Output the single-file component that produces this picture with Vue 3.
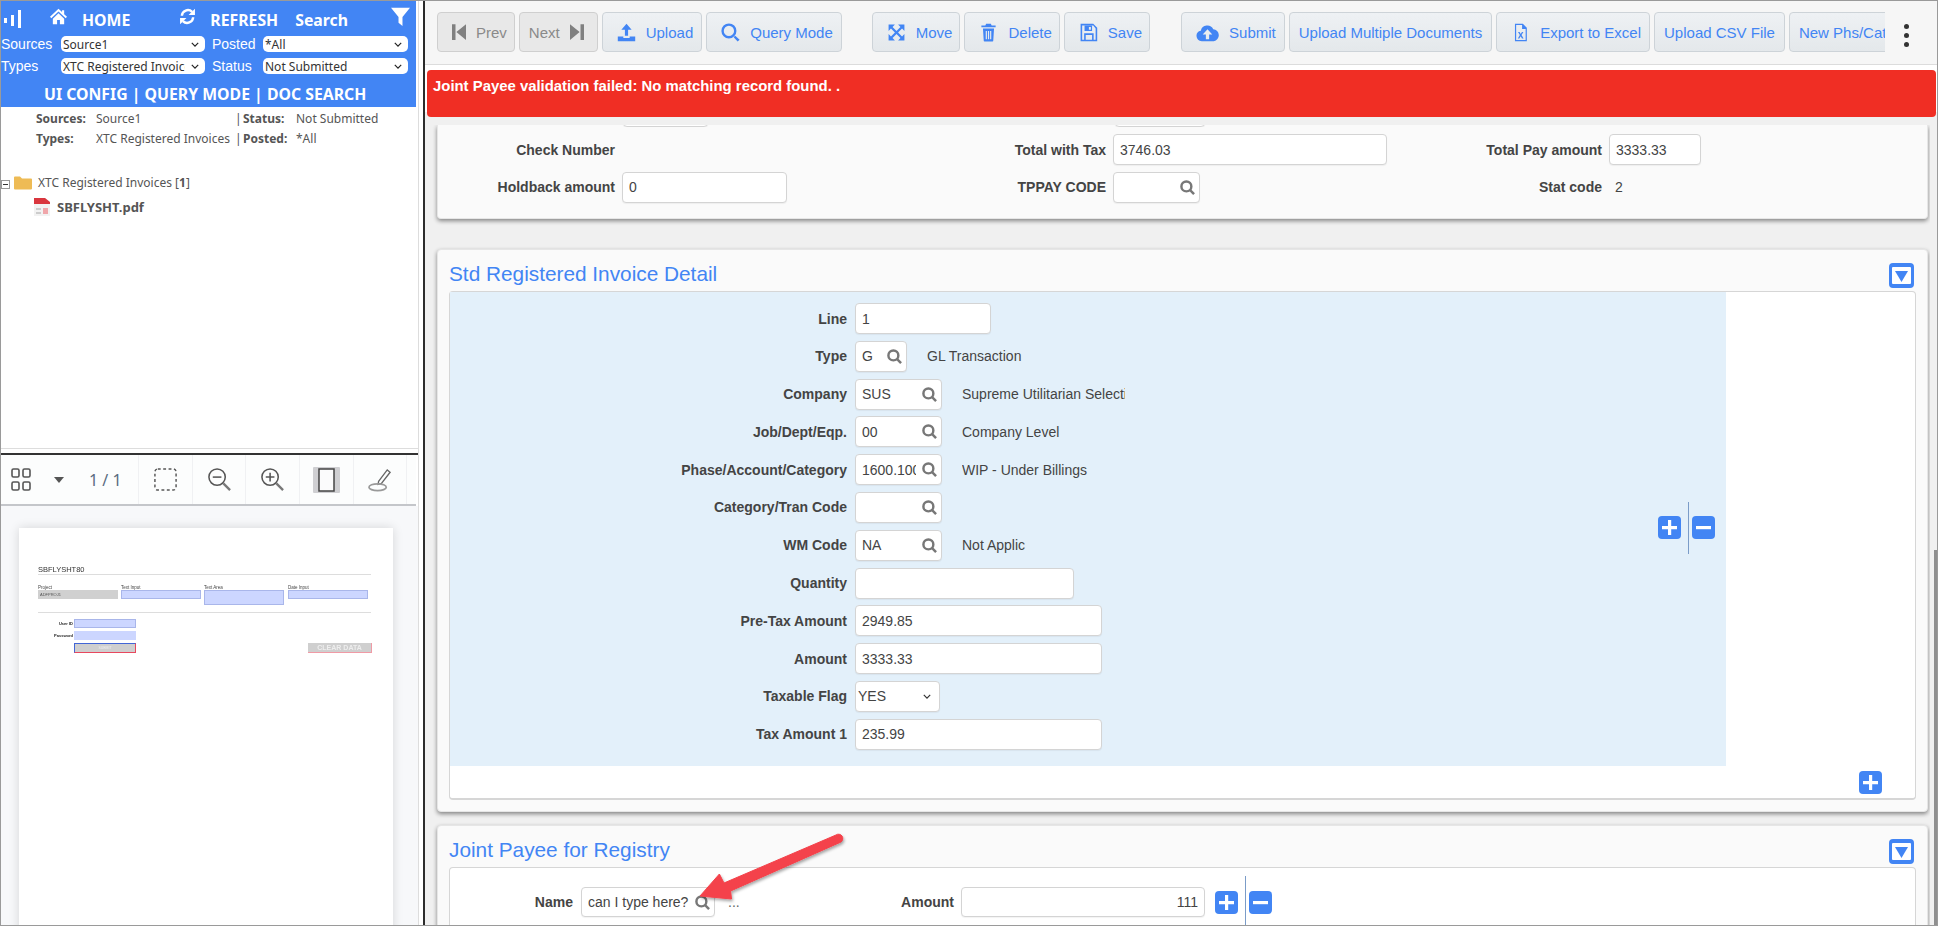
<script setup>
const icons = {
  prev: 'M4 3h4v18H4z M20 3 9 12l11 9z',
  next: 'M20 3h-4v18h4z M4 3l11 9-11 9z',
  upload: 'M12 1 5.5 8.5H10V16h4V8.500h4.500z M1 17h7v2h8v-2h7v6H1z',
  search: 'M10 .5a9.500 9.500 0 1 0 0 19 9.500 9.500 0 0 0 0-19z M10 3.500a6.500 6.500 0 1 1 0 13 6.500 6.500 0 0 1 0-13z M16 18l5 5.500 2.500-2.500-5.500-5z',
  move: 'M2 2h8L7 5l5 5 5-5-3-3h8v8l-3-3-5 5 5 5 3-3v8h-8l3-3-5-5-5 5 3 3H2v-8l3 3 5-5-5-5-3 3z',
  trash: 'M9 1h6l1 2h5v2.500H3V3h5z M5 7h14l-1 15.500a1 1 0 0 1-1 1H7a1 1 0 0 1-1-1z M8.500 10v10.500H10V10z M11.300 10v10.500h1.500V10z M14 10v10.500h1.500V10z',
  save: 'M2 1h16l5 5v17H2z M4 3v18h17V7l-3-4z M7 3.500h9.500V10H7z M12.500 5v3.500H15V5z M6.500 13h12v8h-12z M8.500 15v6h8v-6z',
  cloud: 'M6 21a5.500 5.500 0 0 1-1-10.900A7 7 0 0 1 18 8.500 6.300 6.300 0 0 1 18.500 21z M12 8.500 7 14h3.300v5h3.400v-5H17z',
  excel: 'M5 1h10l5 5v17H5z M6.500 2.500v19h12V7.500H14V2.500z M8.800 11.500h2l1.500 2.500 1.500-2.500h1.900l-2.400 3.800 2.600 4.200h-2l-1.700-2.800-1.700 2.800H8.600l2.600-4.200z',
}

const leftButtons = [
  { label: 'Prev', icon: 'prev', off: true },
  { label: 'Next', icon: 'next', off: true, after: true },
  { label: 'Upload', icon: 'upload' },
  { label: 'Query Mode', icon: 'search', wide: true },
]
const midButtons = [
  { label: 'Move', icon: 'move' },
  { label: 'Delete', icon: 'trash' },
  { label: 'Save', icon: 'save' },
]
const rightButtons = [
  { label: 'Submit', icon: 'cloud', big: true },
  { label: 'Upload Multiple Documents' },
  { label: 'Export to Excel', icon: 'excel' },
  { label: 'Upload CSV File' },
  { label: 'New Phs/Cat' },
]

// width is the input box width, lookup adds the little magnifier
const detailRows = [
  { label: 'Line', value: '1', width: 136 },
  { label: 'Type', value: 'G', width: 52, lookup: true, desc: 'GL Transaction', descGap: 20 },
  { label: 'Company', value: 'SUS', width: 87, lookup: true, desc: 'Supreme Utilitarian Selection Inc', descGap: 20 },
  { label: 'Job/Dept/Eqp.', value: '00', width: 87, lookup: true, desc: 'Company Level', descGap: 20 },
  { label: 'Phase/Account/Category', value: '1600.100', width: 87, lookup: true, desc: 'WIP - Under Billings', descGap: 20 },
  { label: 'Category/Tran Code', value: '', width: 87, lookup: true },
  { label: 'WM Code', value: 'NA', width: 87, lookup: true, desc: 'Not Applic', descGap: 20 },
  { label: 'Quantity', value: '', width: 219 },
  { label: 'Pre-Tax Amount', value: '2949.85', width: 247 },
  { label: 'Amount', value: '3333.33', width: 247 },
  { label: 'Taxable Flag', value: 'YES', width: 85, select: true },
  { label: 'Tax Amount 1', value: '235.99', width: 247 },
]
</script>

<template>
  <div class="app">
    <aside class="left">
      <header class="blue">
        <div class="top-row">
          <svg class="i-signal" viewBox="0 0 17 18"><path d="M0 8h3v5H0z M7 5h3v11H7z M14 0h3v18h-3z" fill="#fff" /></svg>
          <svg class="i-home" viewBox="0 0 24 24"><path d="M12 1 0 12.500l1.800 2L12 5l10.200 9.500 1.800-2-4-3.800V3h-3v2.800z M12 7.500 4 15v8h6v-6h4v6h6v-8z" fill="#fff" /></svg>
          <span class="top-link home-link">HOME</span>
          <svg class="i-refresh" viewBox="0 0 24 24">
            <path d="M4 11a8.500 8.500 0 0 1 14.500-5.500M20 13a8.500 8.500 0 0 1-14.500 5.500" fill="none" stroke="#fff" stroke-width="3.400" />
            <path d="M22.500 1v9h-9z M1.500 23v-9h9z" fill="#fff" />
          </svg>
          <span class="top-link refresh-link">REFRESH</span>
          <span class="top-link search-link">Search</span>
          <svg class="i-funnel" viewBox="0 0 24 24"><path d="M0 1h24L14.500 12.500V24l-5-4v-7.500z" fill="#fff" /></svg>
        </div>
        <div class="filters">
          <label>Sources</label>
          <div class="pick"><span>Source1</span><svg viewBox="0 0 10 6"><path d="M1 1l4 4 4-4" fill="none" stroke="#222" stroke-width="1.500" /></svg></div>
          <label class="second">Posted</label>
          <div class="pick"><span>*All</span><svg viewBox="0 0 10 6"><path d="M1 1l4 4 4-4" fill="none" stroke="#222" stroke-width="1.500" /></svg></div>
          <label>Types</label>
          <div class="pick"><span class="clip">XTC Registered Invoices</span><svg viewBox="0 0 10 6"><path d="M1 1l4 4 4-4" fill="none" stroke="#222" stroke-width="1.500" /></svg></div>
          <label class="second">Status</label>
          <div class="pick"><span>Not Submitted</span><svg viewBox="0 0 10 6"><path d="M1 1l4 4 4-4" fill="none" stroke="#222" stroke-width="1.500" /></svg></div>
        </div>
        <div class="config-links">UI CONFIG | QUERY MODE | DOC SEARCH</div>
      </header>

      <div class="doc-list">
        <div class="info">
          <b>Sources:</b><span>Source1</span><span>|</span><b>Status:</b><span>Not Submitted</span>
          <b>Types:</b><span>XTC Registered Invoices</span><span>|</span><b>Posted:</b><span>*All</span>
        </div>
        <div class="tree-row">
          <span class="tree-toggle"></span>
          <svg class="i-folder" viewBox="0 0 18 14"><path d="M0 2a1 1 0 0 1 1-1h5l2 2h9a1 1 0 0 1 1 1v9a1 1 0 0 1-1 1H1a1 1 0 0 1-1-1z" fill="#eebb55" /></svg>
          <span>XTC Registered Invoices [<b>1</b>]</span>
        </div>
        <div class="file-row">
          <svg class="i-pdf" viewBox="0 0 16 18">
            <path d="M0 0h11l5 4v14H0z" fill="#f2f2f2" />
            <path d="M0 0h11l5 4v2H0z" fill="#d9363e" />
            <path d="M2 10h5v2H2z M2 14h5v2H2z" fill="#ccc" />
            <path d="M9 10h5v6H9z" fill="#f0a6aa" />
          </svg>
          <span>SBFLYSHT.pdf</span>
        </div>
      </div>

      <div class="viewer">
        <div class="viewer-bar">
          <div class="cell first">
            <svg class="i-thumbs" viewBox="0 0 20 23" fill="none" stroke="#555" stroke-width="1.600">
              <rect x="1" y="1" width="7" height="8" rx="1.500" /><rect x="12" y="1" width="7" height="8" rx="1.500" />
              <rect x="1" y="14" width="7" height="8" rx="1.500" /><rect x="12" y="14" width="7" height="8" rx="1.500" />
            </svg>
            <span class="caret"></span>
            <span class="count">1 / 1</span>
          </div>
          <div class="cell"><svg class="tool" viewBox="0 0 26 26"><rect x="2" y="2" width="22" height="22" rx="3" fill="none" stroke="#555" stroke-width="1.500" stroke-dasharray="3 2.600" /></svg></div>
          <div class="cell"><svg class="tool" viewBox="0 0 26 26" fill="none" stroke="#555" stroke-width="1.600"><circle cx="10.500" cy="10.500" r="8.500" /><path d="M6 10.500h9" /><path d="M17 17l7 7" stroke-width="2.400" stroke="#777" /></svg></div>
          <div class="cell"><svg class="tool" viewBox="0 0 26 26" fill="none" stroke="#555" stroke-width="1.600"><circle cx="10.500" cy="10.500" r="8.500" /><path d="M6 10.500h9M10.500 6v9" /><path d="M17 17l7 7" stroke-width="2.400" stroke="#777" /></svg></div>
          <div class="cell"><svg class="tool fit" viewBox="0 0 27 26"><rect width="27" height="26" rx="1" fill="#cfcfd2" /><rect x="6" y="2" width="15" height="22" fill="#fbfbfc" stroke="#444" stroke-width="1.500" /></svg></div>
          <div class="cell"><svg class="tool" viewBox="0 0 26 26" fill="none" stroke="#666" stroke-width="1.400"><path d="M11 15 20 3l3 2.500L14 17l-3.500 1z" /><ellipse cx="10" cy="21" rx="9" ry="3.500" stroke="#999" stroke-width="1.800" /></svg></div>
        </div>
        <div class="pdf-area">
          <div class="pdf-page">
            <div class="pdf-title">SBFLYSHT80</div>
            <div class="pdf-grid">
              <div><small>Project</small><div class="pf gray">ADFPROJ1</div></div>
              <div><small>Text Input</small><div class="pf"></div></div>
              <div><small>Text Area</small><div class="pf tall"></div></div>
              <div><small>Date Input</small><div class="pf"></div></div>
            </div>
            <div class="pdf-login">
              <div class="pdf-line"><em>User ID</em><div class="pf short"></div></div>
              <div class="pdf-line"><em>Password</em><div class="pf short plain"></div></div>
              <div class="pdf-line buttons">
                <div class="pdf-btn submit">SUBMIT</div>
                <div class="pdf-btn clear">CLEAR DATA</div>
              </div>
            </div>
          </div>
        </div>
      </div>
    </aside>

    <div class="splitter"></div>

    <main class="right">
      <div class="toolbar">
        <div class="tool-scroll">
          <div class="tool-group">
            <button v-for="b in leftButtons" :key="b.label" class="btn" :class="{ off: b.off, after: b.after }">
              <svg v-if="b.icon" :viewBox="b.off ? '4 3 16 18' : '0 0 24 24'"><path :d="icons[b.icon]" fill-rule="evenodd" /></svg>
              <span>{{ b.label }}</span>
            </button>
          </div>
          <div class="tool-group mid">
            <button v-for="b in midButtons" :key="b.label" class="btn">
              <svg viewBox="0 0 24 24"><path :d="icons[b.icon]" fill-rule="evenodd" /></svg>
              <span>{{ b.label }}</span>
            </button>
          </div>
          <div class="tool-group">
            <button v-for="b in rightButtons" :key="b.label" class="btn" :class="{ plain: !b.icon }">
              <svg v-if="b.icon" viewBox="0 0 24 24" :class="{ big: b.big }"><path :d="icons[b.icon]" fill-rule="evenodd" /></svg>
              <span>{{ b.label }}</span>
            </button>
          </div>
        </div>
        <div class="more"><i></i><i></i><i></i></div>
      </div>

      <div class="alert-zone">
        <div class="alert">Joint Payee validation failed: No matching record found. .</div>
      </div>

      <div class="scroll-wrap">
        <div class="content">
          <section class="card head-card">
            <div class="peek">
              <div class="box p1"></div>
              <div class="box p2"></div>
            </div>
            <div class="head-grid">
              <div class="pair"><label>Check Number</label></div>
              <div class="pair"><label>Total with Tax</label><div class="box" style="width: 274px"><span>3746.03</span></div></div>
              <div class="pair"><label>Total Pay amount</label><div class="box" style="width: 92px"><span>3333.33</span></div></div>
              <div class="pair low"><label>Holdback amount</label><div class="box" style="width: 165px"><span>0</span></div></div>
              <div class="pair low">
                <label>TPPAY CODE</label>
                <div class="box" style="width: 87px">
                  <span></span>
                  <svg class="lens" viewBox="0 0 16 16"><circle cx="6.800" cy="6.800" r="5.300" /><path d="M10.500 10.500 15 15" /></svg>
                </div>
              </div>
              <div class="pair low"><label>Stat code</label><span class="static">2</span></div>
            </div>
          </section>

          <section class="card detail-card">
            <div class="card-head">
              <h2>Std Registered Invoice Detail</h2>
              <svg class="collapse" viewBox="0 0 25 25"><rect width="25" height="25" rx="4" fill="#4285f4" /><rect x="3" y="4" width="19" height="17" rx="1" fill="#fff" /><path d="M6 8h13l-6.500 11z" fill="#4285f4" /></svg>
            </div>
            <div class="inner">
              <div class="band">
                <div class="band-form">
                  <div v-for="r in detailRows" :key="r.label" class="form-row">
                    <label>{{ r.label }}</label>
                    <div class="box" :class="{ select: r.select }" :style="{ width: r.width + 'px' }">
                      <span :class="{ tight: r.value === '1600.100' }">{{ r.value }}</span>
                      <svg v-if="r.lookup" class="lens" viewBox="0 0 16 16"><circle cx="6.800" cy="6.800" r="5.300" /><path d="M10.500 10.500 15 15" /></svg>
                      <svg v-if="r.select" class="chev" viewBox="0 0 10 6"><path d="M1 1l4 4 4-4" fill="none" stroke="#333" stroke-width="1.500" /></svg>
                    </div>
                    <span v-if="r.desc" class="desc" :style="{ marginLeft: r.descGap + 'px' }">{{ r.desc }}</span>
                  </div>
                </div>
                <div class="row-actions">
                  <svg class="square" viewBox="0 0 23 23"><rect width="23" height="23" rx="4" fill="#4285f4" /><path d="M10 4h3.200v6H19v3.200h-5.800V19H10v-5.800H4V10h6z" fill="#fff" /></svg>
                  <i class="vr"></i>
                  <svg class="square" viewBox="0 0 23 23"><rect width="23" height="23" rx="4" fill="#4285f4" /><path d="M4 10h15v3.200H4z" fill="#fff" /></svg>
                </div>
              </div>
              <div class="inner-foot">
                <svg class="square" viewBox="0 0 23 23"><rect width="23" height="23" rx="4" fill="#4285f4" /><path d="M10 4h3.200v6H19v3.200h-5.800V19H10v-5.800H4V10h6z" fill="#fff" /></svg>
              </div>
            </div>
          </section>

          <section class="card payee-card">
            <div class="card-head">
              <h2>Joint Payee for Registry</h2>
              <svg class="collapse" viewBox="0 0 25 25"><rect width="25" height="25" rx="4" fill="#4285f4" /><rect x="3" y="4" width="19" height="17" rx="1" fill="#fff" /><path d="M6 8h13l-6.500 11z" fill="#4285f4" /></svg>
            </div>
            <div class="inner payee-inner">
              <label class="name-label">Name</label>
              <div class="box" style="width: 134px">
                <span>can I type here?</span>
                <svg class="lens" viewBox="0 0 16 16"><circle cx="6.800" cy="6.800" r="5.300" /><path d="M10.500 10.500 15 15" /></svg>
              </div>
              <span class="dots">...</span>
              <label class="amount-label">Amount</label>
              <div class="box amount-box"><span>111</span></div>
              <div class="payee-actions">
                <svg class="square" viewBox="0 0 23 23"><rect width="23" height="23" rx="4" fill="#4285f4" /><path d="M10 4h3.200v6H19v3.200h-5.800V19H10v-5.800H4V10h6z" fill="#fff" /></svg>
                <i class="vr"></i>
                <svg class="square" viewBox="0 0 23 23"><rect width="23" height="23" rx="4" fill="#4285f4" /><path d="M4 10h15v3.200H4z" fill="#fff" /></svg>
              </div>
            </div>
          </section>
        </div>
        <div class="track"><div class="thumb"></div></div>
      </div>
    </main>

    <!-- annotation drawn on top of the screenshot -->
    <svg class="callout" viewBox="0 0 160 90">
      <defs>
        <filter id="arrow-shadow" x="-20%" y="-20%" width="140%" height="140%">
          <feDropShadow dx="1" dy="2" stdDeviation="1.500" flood-color="#000" flood-opacity="0.35" />
        </filter>
      </defs>
      <path d="M146 10a4 4 0 0 1 5 7L40.600 66l.9 8L10 71l19.400-22L34 58z" fill="#f4424b" stroke="#f4424b" stroke-width="1" stroke-linejoin="round" filter="url(#arrow-shadow)" />
    </svg>
  </div>
</template>

<style scoped>
.app {
  position: relative;
  display: flex;
  width: 1938px;
  height: 926px;
  box-sizing: border-box;
  border: 1px solid #9a9a9a;
  background: #fff;
  overflow: hidden;
  font-family: "Liberation Sans", Arial, sans-serif;
}

/* left pane */
.left {
  display: flex;
  flex-direction: column;
  width: 417px;
  flex: none;
  border-right: 1px solid #ddd;
  box-sizing: content-box;
  font-family: "Noto Sans", "Open Sans", sans-serif;
}
.blue {
  width: 415px;
  height: 106px;
  flex: none;
  background: #4285f4;
  color: #fff;
}
.top-row {
  position: relative;
  display: flex;
  align-items: center;
  height: 35px;
  font-weight: 700;
}
.i-signal { width: 17px; height: 18px; margin-left: 3px; }
.i-home { width: 17px; height: 17px; margin: -4px 0 0 29px; }
.i-refresh { width: 17px; height: 17px; margin: -4px 0 0 0; }
.i-funnel { width: 19px; height: 19px; margin: -4px 6px 0 auto; }
.top-link { font-size: 15.800px; margin-top: 3px; white-space: nowrap; }
.home-link { margin-left: 15px; margin-right: 49px; }
.refresh-link { margin-left: 14px; margin-right: 17px; }

.filters {
  display: grid;
  grid-template-columns: 60px 144px 58px 145px;
  grid-auto-rows: 16px;
  row-gap: 6px;
}
.filters label {
  color: #fff;
  font-size: 14px;
  font-weight: 400;
  line-height: 16px;
  text-align: left;
  font-family: "Liberation Sans", Arial, sans-serif;
}
.filters .second { padding-left: 7px; }
.pick {
  display: flex;
  align-items: center;
  justify-content: space-between;
  padding: 0 6px 0 2px;
  background: #fff;
  border-radius: 5px;
  color: #333;
  font-size: 12px;
  overflow: hidden;
}
.pick span { white-space: nowrap; }
.pick .clip { width: 122px; overflow: hidden; }
.pick svg { width: 8px; height: 5px; flex: none; }
.config-links {
  margin-top: 9px;
  padding-left: 43px;
  font-size: 15.800px;
  font-weight: 700;
  white-space: nowrap;
}

.doc-list {
  flex: none;
  height: 342px;
  box-sizing: border-box;
  border-bottom: 1px solid #ddd;
  color: #555;
  font-size: 12px;
}
.info {
  display: grid;
  grid-template-columns: 60px 139px 8px 53px auto;
  grid-auto-rows: 20px;
  align-items: center;
  padding: 1px 0 0 35px;
}
.tree-row, .file-row { display: flex; align-items: center; }
.tree-row { height: 20px; margin-top: 24px; }
.tree-toggle {
  position: relative;
  width: 7px;
  height: 7px;
  border: 1px solid #999;
  margin-top: 4px;
}
.tree-toggle::after {
  content: "";
  position: absolute;
  left: 1px;
  right: 1px;
  top: 3px;
  height: 1px;
  background: #333;
}
.i-folder { width: 18px; height: 15px; margin: 0 6px 0 4px; }
.file-row {
  height: 20px;
  margin-top: 5px;
  padding-left: 33px;
  font-size: 13px;
  font-weight: 700;
}
.i-pdf { width: 16px; height: 18px; margin-right: 7px; }

.viewer {
  display: flex;
  flex-direction: column;
  flex: 1;
  min-height: 0;
  margin-top: 4px;
  border-top: 2px solid #333;
}
.viewer-bar {
  display: flex;
  flex: none;
  height: 51px;
  width: 415px;
  background: #fcfdfd;
  border-bottom: 2px solid #c4c6ca;
  box-sizing: border-box;
}
.cell {
  display: flex;
  align-items: center;
  justify-content: center;
  width: 53.700px;
  box-sizing: border-box;
  border-right: 1px solid #f0f1f3;
}
.cell.first {
  width: 138px;
  justify-content: flex-start;
}
.i-thumbs { width: 20px; height: 23px; margin-left: 10px; }
.caret {
  width: 0;
  height: 0;
  margin-left: 23px;
  border: 5px solid transparent;
  border-top: 6px solid #555;
  border-bottom: 0;
}
.count {
  margin-left: 25px;
  font-size: 16px;
  color: #5a6b80;
  white-space: nowrap;
}
.tool { width: 25px; height: 25px; }
.tool.fit { width: 27px; height: 26px; }

.pdf-area {
  flex: 1;
  min-height: 0;
  background: #f7f8fa;
  padding: 22px 0 0 18px;
  overflow: hidden;
}
.pdf-page {
  box-sizing: border-box;
  width: 374px;
  height: 500px;
  padding: 38px 22px 0 19px;
  background: #fff;
  box-shadow: 0 0 10px rgba(0, 0, 0, 0.14);
  font-family: "Liberation Sans", Arial, sans-serif;
  filter: blur(0.35px);
}
.pdf-title {
  font-size: 7.500px;
  line-height: 7px;
  color: #333;
  border-bottom: 1px solid #ddd;
  padding-bottom: 1px;
}
.pdf-grid {
  display: grid;
  grid-template-columns: 83px 83px 84px 81px;
  box-sizing: border-box;
  height: 38px;
  padding-top: 10px;
  border-bottom: 1px solid #ddd;
}
.pdf-grid small {
  display: block;
  font-size: 4.500px;
  line-height: 5px;
  color: #444;
}
.pf {
  width: 80px;
  height: 9px;
  background: #ccd6ff;
  border: 1px solid #a9b6ea;
  box-sizing: border-box;
  font-size: 4px;
  line-height: 7px;
  color: #555;
}
.pf.gray {
  background: #d0d0d0;
  border-color: #d0d0d0;
  padding-left: 1px;
}
.pf.tall { height: 15px; }
.pf.short { width: 62px; }
.pf.plain { border-color: #ccd6ff; }
.pdf-login { padding-top: 6px; }
.pdf-line {
  display: flex;
  align-items: center;
  height: 9px;
  margin-bottom: 3px;
}
.pdf-line em {
  width: 35px;
  padding-right: 1px;
  font-size: 4px;
  font-style: normal;
  font-weight: 700;
  text-align: right;
  color: #222;
}
.pdf-line.buttons {
  justify-content: space-between;
  height: 10px;
  padding-left: 36px;
}
.pdf-btn {
  height: 10px;
  box-sizing: border-box;
  background: #cfcfcf;
  color: #eee;
  text-align: center;
}
.pdf-btn.submit {
  width: 62px;
  border: 1px solid #4266d6;
  border-right-color: #e8485e;
  border-bottom-color: #e8485e;
  font-size: 3.500px;
  line-height: 8px;
}
.pdf-btn.clear {
  width: 64px;
  margin-right: -1px;
  border-bottom: 1px solid #f09aa5;
  border-right: 1px solid #f09aa5;
  font-size: 7px;
  line-height: 9px;
  font-weight: 700;
}

.splitter {
  flex: none;
  width: 2px;
  margin-left: 4px;
  background: #2c2c2c;
}

/* right pane */
.right {
  display: flex;
  flex-direction: column;
  flex: 1;
  min-width: 0;
  background: #f0f0f0;
}
.toolbar {
  display: flex;
  flex: none;
  height: 64px;
  box-sizing: border-box;
  padding: 11px 0 0 12px;
  background: #f6f6f6;
  border-bottom: 1px solid #dcdcdc;
  box-shadow: 0 1px 2px rgba(0, 0, 0, 0.18);
}
.tool-scroll {
  display: flex;
  width: 1448px;
  height: 40px;
  overflow: hidden;
  flex: none;
}
.tool-group {
  display: flex;
  flex: none;
  gap: 4px;
  margin-right: 30px;
}
.tool-group.mid { margin-right: 31px; }
.tool-group.mid .btn { padding-right: 7px; }
.btn {
  display: flex;
  align-items: center;
  flex: none;
  gap: 10px;
  height: 40px;
  box-sizing: border-box;
  padding: 0 8px 0 14px;
  border: 1px solid #cdd3d8;
  border-radius: 4px;
  background: linear-gradient(#eef1f4, #e4e8eb);
  color: #4285f4;
  font: 15px "Liberation Sans", Arial, sans-serif;
  white-space: nowrap;
}
.btn svg { width: 19px; height: 19px; fill: #4285f4; flex: none; }
.btn.off svg { width: 14px; height: 16px; fill: #808080; }
.btn svg.big { width: 23px; height: 23px; }
.btn.plain { padding: 0 9px; }
.btn.off {
  padding-right: 7px;
  color: #8a8a8a;
  background: #e8e8e8;
  border-color: #cfcfcf;
}
.btn.after { flex-direction: row-reverse; padding: 0 13px 0 9px; }
.more {
  display: flex;
  flex-direction: column;
  gap: 4px;
  margin: 12px 0 0 19px;
}
.more i {
  width: 5px;
  height: 5px;
  border-radius: 50%;
  background: #333;
}

.alert-zone {
  flex: none;
  height: 60px;
  padding: 5px 1px 0 2px;
  box-sizing: border-box;
  background: linear-gradient(#fff 0, #fff 47px, #f0f0f0 47px);
}
.alert {
  height: 47px;
  box-sizing: border-box;
  padding: 7px 0 0 6px;
  background: #f02e24;
  border-radius: 4px;
  color: #fff;
  font-size: 14.900px;
  font-weight: 700;
  line-height: 18px;
}

.scroll-wrap {
  display: flex;
  flex: 1;
  min-height: 0;
}
.content {
  flex: 1;
  min-width: 0;
  padding-left: 12px;
  overflow: hidden;
}
.track {
  flex: none;
  width: 7px;
}
.thumb {
  width: 3px;
  height: 380px;
  margin: 425px 0 0 4px;
  background: #8f8f8f;
}

.card {
  width: 1491px;
  box-sizing: border-box;
  background: #fafafa;
  border: 1px solid #e6e6e6;
  border-radius: 4px;
  box-shadow: 0 2px 4px rgba(0, 0, 0, 0.45);
}
.head-card {
  height: 94px;
  border-top: 0;
  border-radius: 0 0 4px 4px;
}
.peek {
  position: relative;
  height: 2px;
  overflow: hidden;
}
.peek .box {
  position: absolute;
  bottom: 0;
}
.peek .p1 { left: 185px; width: 85px; }
.peek .p2 { left: 677px; width: 90px; }
.head-grid {
  display: grid;
  grid-template-columns: 491px 496px 1fr;
  grid-template-rows: 31px 30px;
  row-gap: 7px;
  padding-top: 7px;
}
.pair {
  display: flex;
  align-items: center;
  gap: 7px;
}
.pair label {
  width: 177px;
  flex: none;
}
label {
  color: #444;
  font-size: 14px;
  font-weight: 700;
  text-align: right;
  white-space: nowrap;
}
.static {
  margin-left: 6px;
  font-size: 14px;
  color: #444;
}

.box {
  display: flex;
  align-items: center;
  flex: none;
  height: 31px;
  box-sizing: border-box;
  padding: 0 4px 0 6px;
  background: #fff;
  border: 1px solid #d4d4d4;
  border-radius: 4px;
  box-shadow: 0 1px 1px rgba(0, 0, 0, 0.05);
  color: #444;
  font-size: 14px;
  white-space: nowrap;
}
.box > span {
  flex: 1;
  min-width: 0;
  overflow: hidden;
}
.box > span.tight { flex: none; width: 54px; }
.box.select { padding: 0 8px 0 2px; }
.lens {
  width: 15px;
  height: 15px;
  margin-left: auto;
  flex: none;
  fill: none;
  stroke: #777;
  stroke-width: 2.600;
}
.chev { width: 8px; height: 5px; flex: none; }

.detail-card {
  height: 563px;
  margin-top: 30px;
  padding: 0 11px 0;
}
.card-head {
  display: flex;
  justify-content: space-between;
  height: 41px;
  padding: 13px 2px 0 0;
  box-sizing: border-box;
}
h2 {
  margin: -1px 0 0;
  color: #4285f4;
  font-size: 20.800px;
  font-weight: 400;
  line-height: 24px;
}
.collapse { width: 25px; height: 25px; flex: none; }
.inner {
  background: #fff;
  border: 1px solid #d6d6d6;
  border-bottom-width: 2px;
  border-radius: 4px;
}
.detail-card .inner { height: 509px; box-sizing: border-box; }
.band {
  display: flex;
  align-items: center;
  width: 1276px;
  height: 474px;
  box-sizing: border-box;
  padding: 11px 11px 0 0;
  background: #e3f0fa;
}
.band-form {
  display: grid;
  grid-auto-rows: 31px;
  row-gap: 6.800px;
  flex: 1;
  align-self: flex-start;
}
.form-row {
  display: flex;
  align-items: center;
}
.form-row label {
  width: 397px;
  margin-right: 8px;
  flex: none;
}
.desc {
  width: 163px;
  overflow: hidden;
  white-space: nowrap;
  color: #444;
  font-size: 14px;
}
.row-actions, .payee-actions {
  display: flex;
  gap: 3px;
}
.row-actions { align-items: center; margin-bottom: 14px; height: 52px; }
.vr {
  width: 1px;
  align-self: stretch;
  margin-left: 4px;
  background: #7b9cc8;
}
.square { width: 23px; height: 23px; flex: none; }
.inner-foot {
  display: flex;
  justify-content: flex-end;
  padding: 5px 33px 0 0;
}

.payee-card {
  margin-top: 13px;
  padding: 0 11px;
  height: 120px;
}
.payee-inner {
  display: flex;
  align-items: flex-start;
  height: 90px;
  box-sizing: border-box;
  padding-top: 19px;
}
.payee-inner .box { height: 30px; }
.name-label, .amount-label { line-height: 30px; }
.name-label { width: 123px; margin-right: 8px; }
.dots { width: 33px; margin-left: 13px; line-height: 30px; font-size: 14px; color: #666; }
.amount-label { width: 193px; margin-right: 7px; }
.amount-box { width: 244px; justify-content: flex-end; padding-right: 6px; }
.amount-box span { flex: none; }
.payee-actions { margin: -11px 0 0 10px; height: 60px; }
.payee-actions .square { margin-top: 15px; }

.callout {
  position: absolute;
  left: 689px;
  top: 824px;
  width: 160px;
  height: 90px;
}
</style>
